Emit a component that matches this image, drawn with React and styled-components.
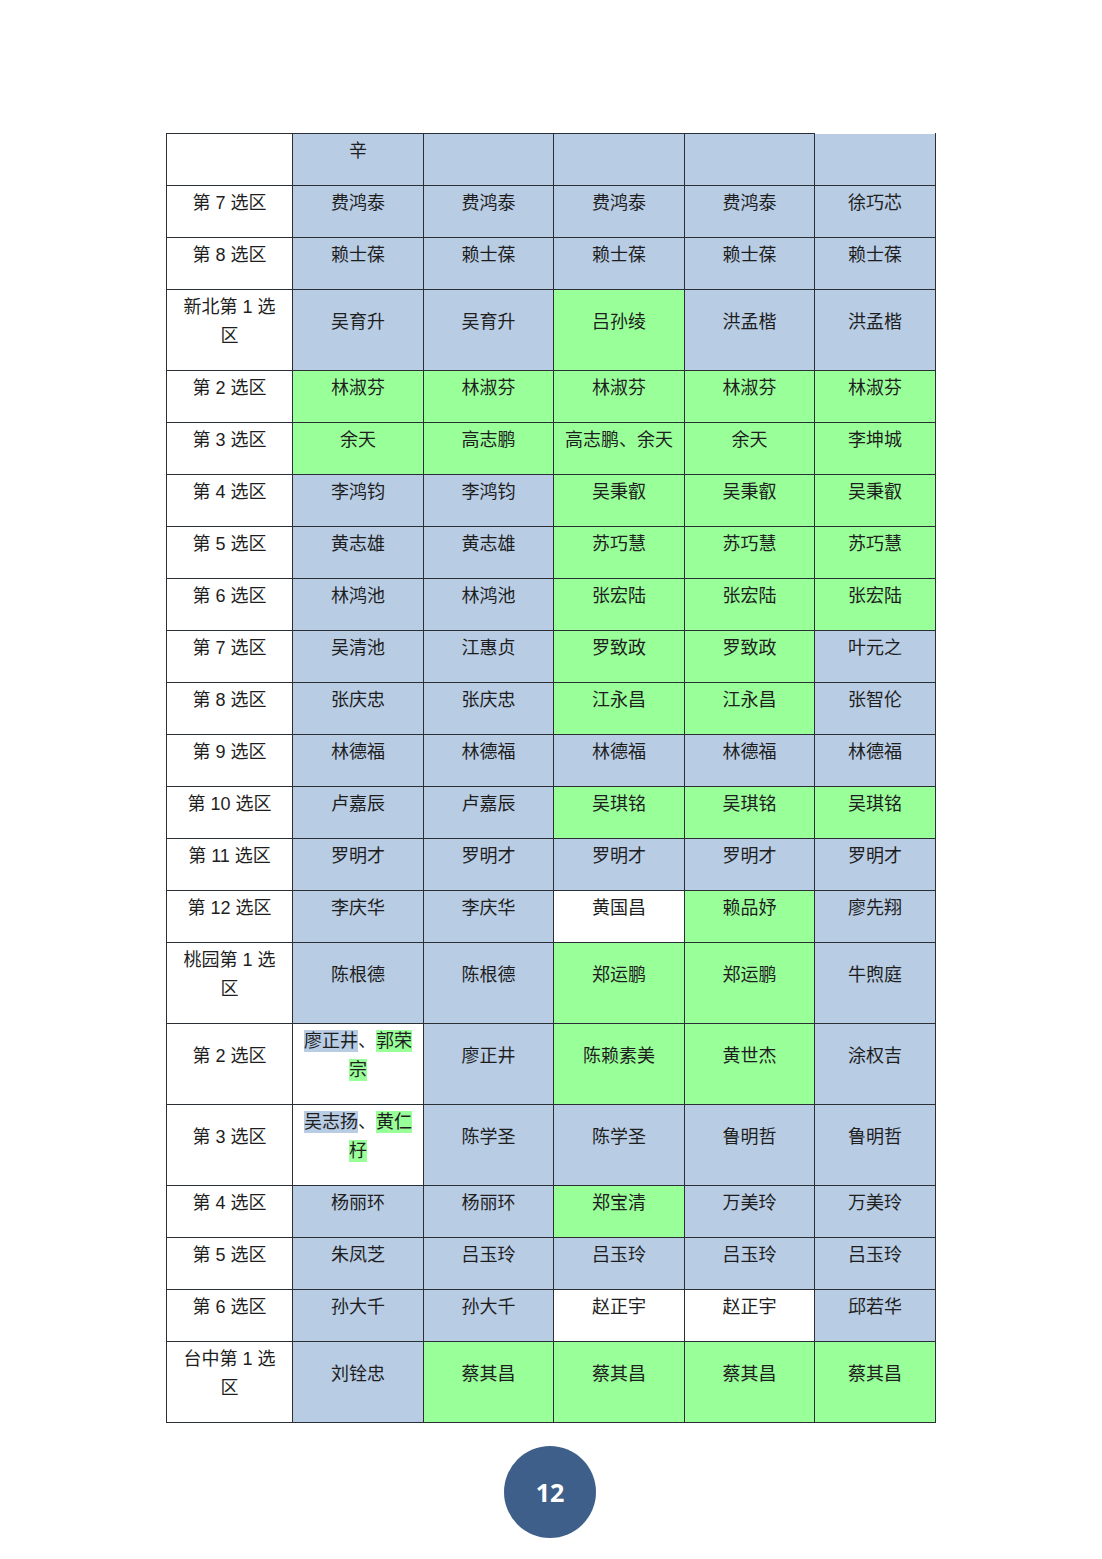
import React from 'react';
import styled, { createGlobalStyle } from 'styled-components';

const GlobalStyle = createGlobalStyle`
  html, body {
    margin: 0;
    padding: 0;
    background: #ffffff;
  }
`;

const FILL = {
  B: '#b8cce4',
  G: '#99ff99',
  W: '#ffffff',
};

const Page = styled.div`
  width: 1102px;
  height: 1559px;
  box-sizing: border-box;
  padding: 133px 0 0 166px;
  font-family: "Liberation Sans", "Noto Sans CJK SC", sans-serif;
  color: #1e1e1e;
`;

const Table = styled.table`
  border-collapse: collapse;
  table-layout: fixed;
  width: 769px;
  font-size: 18px;
  line-height: 29px;
`;

const Cell = styled.td`
  background: ${(p) => FILL[p.$fill] || FILL.W};
  border: 1px solid #2a2f36;
  border-top-color: ${(p) => (p.$noTop ? 'transparent' : '#2a2f36')};
  padding: 3px 6px 19px;
  text-align: center;
  vertical-align: middle;
  box-sizing: border-box;
  word-break: break-all;
`;

const Mark = styled.span`
  background: ${(p) => FILL[p.$fill]};
  padding: 1px 0;
`;

const PageNum = styled.div`
  width: 92px;
  height: 92px;
  border-radius: 50%;
  background: #3e5f8a;
  color: #ffffff;
  display: flex;
  align-items: center;
  justify-content: center;
  font-family: "Open Sans", "Liberation Sans", sans-serif;
  font-weight: 700;
  font-size: 25px;
  margin: 23px 0 0 338px;
`;

const widths = [126, 131, 130, 131, 130, 121];

const rows = [
  ['', ['辛', 'B'], ['', 'B'], ['', 'B'], ['', 'B'], ['', 'B']],
  ['第 7 选区', ['费鸿泰', 'B'], ['费鸿泰', 'B'], ['费鸿泰', 'B'], ['费鸿泰', 'B'], ['徐巧芯', 'B']],
  ['第 8 选区', ['赖士葆', 'B'], ['赖士葆', 'B'], ['赖士葆', 'B'], ['赖士葆', 'B'], ['赖士葆', 'B']],
  [['新北第 1 选', '区'], ['吴育升', 'B'], ['吴育升', 'B'], ['吕孙绫', 'G'], ['洪孟楷', 'B'], ['洪孟楷', 'B']],
  ['第 2 选区', ['林淑芬', 'G'], ['林淑芬', 'G'], ['林淑芬', 'G'], ['林淑芬', 'G'], ['林淑芬', 'G']],
  ['第 3 选区', ['余天', 'G'], ['高志鹏', 'G'], ['高志鹏、余天', 'G'], ['余天', 'G'], ['李坤城', 'G']],
  ['第 4 选区', ['李鸿钧', 'B'], ['李鸿钧', 'B'], ['吴秉叡', 'G'], ['吴秉叡', 'G'], ['吴秉叡', 'G']],
  ['第 5 选区', ['黄志雄', 'B'], ['黄志雄', 'B'], ['苏巧慧', 'G'], ['苏巧慧', 'G'], ['苏巧慧', 'G']],
  ['第 6 选区', ['林鸿池', 'B'], ['林鸿池', 'B'], ['张宏陆', 'G'], ['张宏陆', 'G'], ['张宏陆', 'G']],
  ['第 7 选区', ['吴清池', 'B'], ['江惠贞', 'B'], ['罗致政', 'G'], ['罗致政', 'G'], ['叶元之', 'B']],
  ['第 8 选区', ['张庆忠', 'B'], ['张庆忠', 'B'], ['江永昌', 'G'], ['江永昌', 'G'], ['张智伦', 'B']],
  ['第 9 选区', ['林德福', 'B'], ['林德福', 'B'], ['林德福', 'B'], ['林德福', 'B'], ['林德福', 'B']],
  ['第 10 选区', ['卢嘉辰', 'B'], ['卢嘉辰', 'B'], ['吴琪铭', 'G'], ['吴琪铭', 'G'], ['吴琪铭', 'G']],
  ['第 11 选区', ['罗明才', 'B'], ['罗明才', 'B'], ['罗明才', 'B'], ['罗明才', 'B'], ['罗明才', 'B']],
  ['第 12 选区', ['李庆华', 'B'], ['李庆华', 'B'], ['黄国昌', 'W'], ['赖品妤', 'G'], ['廖先翔', 'B']],
  [['桃园第 1 选', '区'], ['陈根德', 'B'], ['陈根德', 'B'], ['郑运鹏', 'G'], ['郑运鹏', 'G'], ['牛煦庭', 'B']],
  ['第 2 选区', { mixed: [['廖正井', 'B'], ['、', 'W'], ['郭荣', 'G'], null, ['宗', 'G']] }, ['廖正井', 'B'], ['陈赖素美', 'G'], ['黄世杰', 'G'], ['涂权吉', 'B']],
  ['第 3 选区', { mixed: [['吴志扬', 'B'], ['、', 'W'], ['黄仁', 'G'], null, ['杍', 'G']] }, ['陈学圣', 'B'], ['陈学圣', 'B'], ['鲁明哲', 'B'], ['鲁明哲', 'B']],
  ['第 4 选区', ['杨丽环', 'B'], ['杨丽环', 'B'], ['郑宝清', 'G'], ['万美玲', 'B'], ['万美玲', 'B']],
  ['第 5 选区', ['朱凤芝', 'B'], ['吕玉玲', 'B'], ['吕玉玲', 'B'], ['吕玉玲', 'B'], ['吕玉玲', 'B']],
  ['第 6 选区', ['孙大千', 'B'], ['孙大千', 'B'], ['赵正宇', 'W'], ['赵正宇', 'W'], ['邱若华', 'B']],
  [['台中第 1 选', '区'], ['刘铨忠', 'B'], ['蔡其昌', 'G'], ['蔡其昌', 'G'], ['蔡其昌', 'G'], ['蔡其昌', 'G']],
];

const Lines = ({ parts }) =>
  parts.map((p, i) => (
    <React.Fragment key={i}>
      {i > 0 && <br />}
      {p}
    </React.Fragment>
  ));

const Mixed = ({ parts }) =>
  parts.map((p, i) =>
    p === null ? (
      <br key={i} />
    ) : p[1] === 'W' ? (
      <React.Fragment key={i}>{p[0]}</React.Fragment>
    ) : (
      <Mark key={i} $fill={p[1]}>
        {p[0]}
      </Mark>
    )
  );

const App = () => (
  <Page>
    <GlobalStyle />
    <Table>
      <colgroup>
        {widths.map((w, i) => (
          <col key={i} style={{ width: w }} />
        ))}
      </colgroup>
      <tbody>
        {rows.map((row, r) => (
          <tr key={r}>
            <Cell $fill="W">
              {Array.isArray(row[0]) ? <Lines parts={row[0]} /> : row[0]}
            </Cell>
            {row.slice(1).map((c, k) =>
              c.mixed ? (
                <Cell key={k} $fill="W">
                  <Mixed parts={c.mixed} />
                </Cell>
              ) : (
                <Cell key={k} $fill={c[1]} $noTop={r === 0 && k === 4}>
                  {c[0]}
                </Cell>
              )
            )}
          </tr>
        ))}
      </tbody>
    </Table>
    <PageNum>12</PageNum>
  </Page>
);

export default App;
